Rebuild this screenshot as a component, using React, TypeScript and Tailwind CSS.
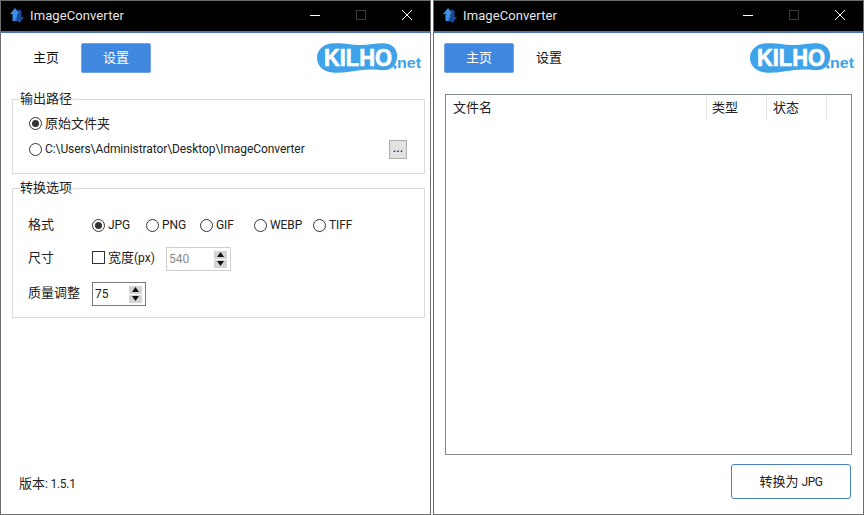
import React from "react";

const font = { fontFamily: 'Roboto,"Noto Sans CJK SC",sans-serif' };

function AppIcon() {
  return (
    <svg width="14" height="15" viewBox="0 0 14 15" className="mb-[2px]">
      <path d="M5 0 L10 6 L7.5 6 L7.5 13 L2.5 13 L2.5 6 L0 6 Z" fill="#3a8fe8" />
      <path d="M8 1.5 L11.5 2.5 L11.5 9 L14 9 L9.5 15 L5 11 L8 9 Z" fill="#1a4a9c" />
    </svg>
  );
}

function TitleBar() {
  return (
    <div className="flex h-[32px] shrink-0 items-center border-b-2 border-[#4a76ad] bg-black pl-[9px] text-[13px] text-[#e6e6e6]">
      <AppIcon />
      <span className="mb-[1px] ml-[6px] flex-1 leading-none tracking-[0.1px]">ImageConverter</span>
      <div className="flex items-center pb-[2px]">
        <svg width="46" height="14" viewBox="0 0 46 14"><path d="M18 7.5H28" stroke="#fff" strokeWidth="1" /></svg>
        <svg width="46" height="14" viewBox="0 0 46 14"><rect x="18.5" y="2.5" width="9" height="9" fill="none" stroke="#3c3c3c" /></svg>
        <svg width="46" height="14" viewBox="0 0 46 14"><path d="M18 2L28 12M28 2L18 12" stroke="#fff" strokeWidth="1" /></svg>
      </div>
    </div>
  );
}

function Logo() {
  return (
    <svg width="105" height="30" viewBox="0 0 105 30" className="shrink-0">
      <path
        d="M14 0.5 C26 -0.5 32 2 44 2 C54 2 62 -0.5 69 0.5 C77 1.5 81 8 80 15 C79 24 73 28 63 27 C52 26 46 27 34 28.5 C24 30 17 30 12 29 C4 27 0 21 0 15 C0 7 6 1.5 14 0.5 Z"
        fill="#3ea3e8"
      />
      <text x="7" y="23" fontFamily="Liberation Sans" fontWeight="700" fontSize="24" fill="#fff" stroke="#fff" strokeWidth="0.7" textLength="68" lengthAdjust="spacingAndGlyphs">KILHO</text>
      <circle cx="78" cy="24" r="1.7" fill="#3ea3e8" />
      <text x="80" y="25" fontFamily="Liberation Sans" fontWeight="700" fontSize="14" fill="#3ea3e8" textLength="24" lengthAdjust="spacingAndGlyphs">net</text>
    </svg>
  );
}

function Tabs({ active }: { active: 0 | 1 }) {
  const item = (label: string, on: boolean) =>
    on ? (
      <div className="flex h-[30px] w-[70px] items-center justify-center rounded-[2px] border border-[#6fa3e4] bg-[#3f87df] text-white">{label}</div>
    ) : (
      <div className="flex h-[30px] w-[70px] items-center justify-center text-[#111]">{label}</div>
    );
  return (
    <div className="flex items-center justify-between pl-[10px] pr-[8px] pt-[10px]">
      <div className="flex">
        {item("主页", active === 0)}
        {item("设置", active === 1)}
      </div>
      <Logo />
    </div>
  );
}

function Radio({ on, label, latin }: { on?: boolean; label: string; latin?: boolean }) {
  return (
    <div className="flex items-center gap-[3px] whitespace-nowrap">
      <span className="flex size-[13px] items-center justify-center rounded-full border border-[#333]">
        {on && <span className="size-[7px] rounded-full bg-[#333]" />}
      </span>
      <span className={latin ? "text-[12px] tracking-[-0.08px]" : ""}>{label}</span>
    </div>
  );
}

function Spin({ value, disabled, w }: { value: string; disabled?: boolean; w: string }) {
  return (
    <div className={`flex h-[24px] items-center justify-between border pl-[2px] pr-[3px] ${w} ${disabled ? "border-[#cfcfcf] text-[#8a8a8a]" : "border-[#7a7a7a] text-[#222]"}`}>
      <span className="text-[12px]">{value}</span>
      <div className="flex flex-col gap-[1px]">
        {["M3.5 0L7 5H0Z", "M0 0H7L3.5 5Z"].map((d) => (
          <span key={d} className="flex h-[8px] w-[13px] items-center justify-center bg-[#d4d4d4]">
            <svg width="7" height="5" viewBox="0 0 7 5"><path d={d} fill="#111" /></svg>
          </span>
        ))}
      </div>
    </div>
  );
}

function Group({ title, className, children }: { title: string; className: string; children: React.ReactNode }) {
  return (
    <div className={`relative ml-[11px] mr-[5px] border border-[#dcdcdc] ${className}`}>
      <span className="absolute -top-[10px] left-[7px] bg-white pr-[1px] leading-[17px]">{title}</span>
      {children}
    </div>
  );
}

function SettingsWindow() {
  return (
    <div className="flex h-full w-[431px] flex-col border border-[#6e6e6e] bg-white">
      <TitleBar />
      <Tabs active={1} />
      <Group title="输出路径" className="mt-[26px] h-[75px]">
        <div className="flex flex-col pl-[16px] pt-[14px] pr-[17px]">
          <Radio on label="原始文件夹" />
          <div className="mt-[6px] flex items-center justify-between">
            <Radio latin label="C:\Users\Administrator\Desktop\ImageConverter" />
            <div className="flex h-[19px] w-[18px] items-center justify-center border border-[#adadad] bg-[#e1e1e1] pb-[3px] text-[13px] leading-none text-black">...</div>
          </div>
        </div>
      </Group>
      <Group title="转换选项" className="mt-[14px] h-[130px]">
        <div className="flex flex-col pl-[15px] pt-[24px]">
          <div className="flex h-[24px] items-center">
            <span className="w-[64px]">格式</span>
            <div className="w-[54px]"><Radio latin on label="JPG" /></div>
            <div className="w-[54px]"><Radio latin label="PNG" /></div>
            <div className="w-[54px]"><Radio latin label="GIF" /></div>
            <div className="w-[59px]"><Radio latin label="WEBP" /></div>
            <Radio latin label="TIFF" />
          </div>
          <div className="mt-[10px] flex h-[24px] items-center">
            <span className="mb-[3px] w-[64px]">尺寸</span>
            <div className="mb-[3px] flex w-[74px] items-center gap-[3px]">
              <span className="size-[13px] border border-[#333]" />
              <span>宽度<span className="text-[12px]">(px)</span></span>
            </div>
            <Spin value="540" disabled w="w-[65px]" />
          </div>
          <div className="mt-[11px] flex h-[24px] items-center">
            <span className="mb-[3px] w-[64px]">质量调整</span>
            <Spin value="75" w="w-[54px]" />
          </div>
        </div>
      </Group>
      <div className="mt-auto pb-[21px] pl-[18px] leading-[17px]">版本<span className="text-[12px] tracking-[-0.25px]">: 1.5.1</span></div>
    </div>
  );
}

function HomeWindow() {
  return (
    <div className="flex h-full w-[431px] flex-col border border-[#6e6e6e] bg-white">
      <TitleBar />
      <Tabs active={0} />
      <div className="mx-[11px] mt-[21px] h-[361px] border border-[#828790]">
        <div className="flex h-[25px] items-center leading-none">
          <span className="w-[260px] pl-[7px]">文件名</span>
          <span className="flex h-full w-[60px] items-center border-l border-[#e5e5e5] pl-[5px]">类型</span>
          <span className="flex h-full w-[61px] items-center border-x border-[#e5e5e5] pl-[6px]">状态</span>
        </div>
      </div>
      <div className="flex justify-end pr-[12px] pt-[9px]">
        <div className="flex h-[35px] w-[120px] items-center justify-center rounded-[3px] border border-[#4a80b8]">转换为<span className="ml-[3px] text-[12px] tracking-[-0.4px]">JPG</span></div>
      </div>
    </div>
  );
}

export default function App() {
  return (
    <div className="flex h-[515px] w-[864px] justify-between overflow-hidden bg-white text-[13px] text-[#222]" style={font}>
      <SettingsWindow />
      <div className="w-[2px]" />
      <HomeWindow />
    </div>
  );
}
